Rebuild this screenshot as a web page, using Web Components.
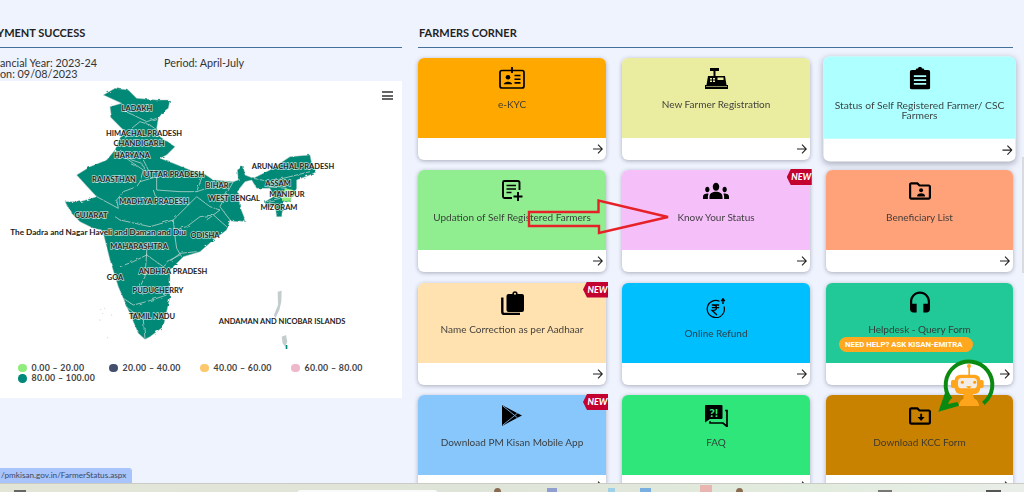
<!DOCTYPE html>
<html lang="en">
<head>
<meta charset="utf-8">
<title>PM Kisan - Farmers Corner</title>
<style>
  html, body { margin: 0; background: #eef3fe; font-family: Lato, "Open Sans", sans-serif; }
  svg { display: block; }
</style>
</head>
<body>
<page-shell>
  <section slot="left">
    <sec-heading cut>YMENT SUCCESS</sec-heading>
    <pay-info year="ancial Year: 2023-24" period="Period: April-July" date="on: 09/08/2023"></pay-info>
    <india-map></india-map>
  </section>
  <section slot="right">
    <sec-heading>FARMERS CORNER</sec-heading>
    <card-grid>
      <farmer-card color="#ffa800" label="e-KYC">
        <svg slot="icon" width="26" height="22" viewBox="0 0 26 22"><rect x="1" y="3.5" width="24" height="17.5" rx="2" fill="none" stroke="#000" stroke-width="1.7"/><path d="M13 0v6" stroke="#000" stroke-width="1.8"/><circle cx="9" cy="10.2" r="2.3"/><path d="M4.8 17.2c0-3.4 8.4-3.4 8.4 0z"/><path d="M15.5 8.5h6M15.5 12.2h6M15.5 15.9h6" stroke="#000" stroke-width="1.6"/></svg>
      </farmer-card>
      <farmer-card color="#eaed9f" label="New Farmer Registration">
        <svg slot="icon" width="23" height="21" viewBox="0 0 23 21"><path d="M0 17h23v4H0zM3 8h17l1.5 9H1.500zM5 0h9v3H10.500v5H8.500V3H5z"/><path d="M5 10h2v1.500H5zM8 10h2v1.500H8zM5 12.500h2V14H5zM8 12.500h2V14H8zM12.500 9.500h6V12h-6z" fill="#eaed9f"/><path d="M1 18.500h21" stroke="#eaed9f" stroke-width=".6"/></svg>
      </farmer-card>
      <farmer-card color="#aeffff" label="Status of Self Registered Farmer/ CSC Farmers" hovered>
        <svg slot="icon" width="20" height="22" viewBox="0 0 20 22"><rect y="3" width="20" height="19" rx="2.200"/><rect x="6" y="1.500" width="8" height="4" rx="1"/><circle cx="10" cy="2" r="2"/><path d="M4 9h12M4 12.800h12M4 16.600h12" stroke="#aeffff" stroke-width="1.700"/></svg>
      </farmer-card>

      <farmer-card color="#90ee90" label="Updation of Self Registered Farmers">
        <svg slot="icon" width="21" height="21" viewBox="0 0 21 21"><path d="M17.500 10V2.500a1.500 1.500 0 0 0-1.500-1.500H2.500A1.500 1.500 0 0 0 1 2.500v14A1.500 1.500 0 0 0 2.500 18H10" fill="none" stroke="#000" stroke-width="1.900"/><path d="M4.500 5.500h9.500M4.500 9h9.500M4.500 12.500h5" stroke="#000" stroke-width="1.700"/><path d="M16 12v9M11.500 16.500h9" stroke="#000" stroke-width="2"/></svg>
      </farmer-card>
      <farmer-card color="#f5c0fa" label="Know Your Status" new>
        <svg slot="icon" width="26" height="17" viewBox="0 5.500 24 12.500" preserveAspectRatio="none"><path d="M12 12.750c1.630 0 3.070.390 4.240.900 1.080.480 1.760 1.560 1.760 2.730V18H6v-1.610c0-1.180.680-2.260 1.760-2.730 1.170-.520 2.610-.910 4.240-.910zM4 13c1.100 0 2-.900 2-2s-.900-2-2-2-2 .900-2 2 .900 2 2 2zm1.130 1.100c-.370-.060-.740-.100-1.130-.100-.990 0-1.930.210-2.780.580C.480 14.900 0 15.620 0 16.430V18h4.500v-1.610c0-.830.230-1.610.630-2.290zM20 13c1.100 0 2-.900 2-2s-.900-2-2-2-2 .900-2 2 .900 2 2 2zm4 3.430c0-.810-.480-1.530-1.220-1.850-.850-.370-1.790-.580-2.780-.580-.390 0-.760.040-1.130.100.400.680.630 1.460.630 2.290V18H24v-1.570zM12 6c1.660 0 3 1.340 3 3s-1.340 3-3 3-3-1.340-3-3 1.340-3 3-3z"/></svg>
      </farmer-card>
      <farmer-card color="#ffa27a" label="Beneficiary List">
        <svg slot="icon" width="22" height="18" viewBox="2 4 20 16"><path d="M20 6h-8l-2-2H4c-1.100 0-1.990.900-1.990 2L2 18c0 1.100.900 2 2 2h16c1.100 0 2-.900 2-2V8c0-1.100-.900-2-2-2zm0 12H4V6h5.170l2 2H20v10z"/><circle cx="13" cy="11.400" r="1.800"/><path d="M9.500 17v-.800c0-1.500 2.300-2.200 3.500-2.200s3.500.700 3.500 2.200v.800z"/></svg>
      </farmer-card>

      <farmer-card color="#ffe2b0" label="Name Correction as per Aadhaar" new>
        <svg slot="icon" width="23" height="24" viewBox="0 0 23 24"><rect x="5.500" y="3" width="17.500" height="18" rx="2"/><circle cx="14" cy="2.800" r="2.600"/><circle cx="14" cy="2.800" r="1" fill="#ffe2b0"/><path d="M1.300 6.500V21a2 2 0 0 0 2 2H19" fill="none" stroke="#000" stroke-width="2.400"/></svg>
      </farmer-card>
      <farmer-card color="#00bfff" label="Online Refund" tall>
        <svg slot="icon" style="margin-top:5px" width="20" height="20" viewBox="0 0 20 20"><path d="M13.500 3.300A8.600 8.600 0 1 0 18 8.500" fill="none" stroke="#000" stroke-width="1.200"/><path d="M5.800 7h7.400M5.800 9.700h7.400M7 7c4.600 0 4.600 5.300 0 5.300H6l5 4.700" fill="none" stroke="#000" stroke-width="1.300"/><path d="M17 6V1.500M15.200 3.200 17 .8l1.800 2.400" fill="none" stroke="#000" stroke-width="1.400"/></svg>
      </farmer-card>
      <farmer-card color="#20c997" label="Helpdesk - Query Form">
        <svg slot="icon" style="margin-bottom:3px" width="20" height="22" viewBox="3 1 18 19"><path d="M12 1c-4.970 0-9 4.030-9 9v7c0 1.660 1.340 3 3 3h3v-8H5v-2c0-3.870 3.130-7 7-7s7 3.130 7 7v2h-4v8h3c1.660 0 3-1.340 3-3v-7c0-4.970-4.030-9-9-9z"/></svg>
        <help-pill slot="extra">NEED HELP? ASK KISAN-EMITRA</help-pill>
      </farmer-card>

      <farmer-card color="#88c7fc" label="Download PM Kisan Mobile App" new>
        <svg slot="icon" width="20" height="21" viewBox="0 0 20 21"><path d="M0 0 15 8l5 2.500L15 13 0 21z"/><path d="M.6.800 12.800 10.500.6 20.200M12.800 10.500 15.600 8M12.800 10.500l2.800 2.500" fill="none" stroke="#88c7fc" stroke-width=".8"/></svg>
      </farmer-card>
      <farmer-card color="#2ee67a" label="FAQ">
        <svg slot="icon" width="23" height="22" viewBox="0 0 23 22"><path d="M1 0h15.500a1 1 0 0 1 1 1v12a1 1 0 0 1-1 1H5l-5 3.500V1a1 1 0 0 1 1-1z"/><text x="8.800" y="11.500" text-anchor="middle" font-family="Lato, sans-serif" font-weight="900" font-size="12" fill="#2ee67a">?!</text><path d="M20 5.500h2v16l-4-3.500H5v-1.800" fill="none" stroke="#000" stroke-width="1.700"/></svg>
      </farmer-card>
      <farmer-card color="#c98200" label="Download KCC Form">
        <svg slot="icon" width="22" height="18" viewBox="2 4 20 16"><path d="M20 6h-8l-2-2H4c-1.100 0-1.990.900-1.990 2L2 18c0 1.100.900 2 2 2h16c1.100 0 2-.900 2-2V8c0-1.100-.900-2-2-2zm0 12H4V6h5.170l2 2H20v10z"/><path d="M12.200 10h1.700v3h2.300L13 16.600 9.800 13h2.400z"/></svg>
      </farmer-card>
    </card-grid>
  </section>
  <task-bar slot="bar"></task-bar>
  <status-tip slot="over">/pmkisan.gov.in/FarmerStatus.aspx</status-tip>
  <arrow-mark slot="over"></arrow-mark>
  <chat-bot slot="over"></chat-bot>
</page-shell>

<script>
// small helper so every element below looks the same
class Base extends HTMLElement {
    constructor() {
        super();
        this.attachShadow({ mode: 'open' });
    }
    connectedCallback() {
        this.shadowRoot.innerHTML = this.render();
    }
}

class PageShell extends Base {
    render() {
        return `
            <style>
                :host { display: flex; flex-direction: column; position: relative; height: 492px; overflow: hidden; background: #eef3fe; }
                .main { display: flex; gap: 16px; height: 483px; overflow: hidden; }
                .left { display: block; width: 402px; overflow: hidden; flex: none; }
                .right { display: block; width: 595px; flex: none; }
                .scroll { position: absolute; right: 0; top: 157px; width: 2px; height: 116px; background: #d9dbe0; }
            </style>
            <div class="main">
                <div class="left"><slot name="left"></slot></div>
                <div class="right"><slot name="right"></slot></div>
            </div>
            <slot name="bar"></slot>
            <div class="scroll"></div>
            <slot name="over"></slot>
        `;
    }
}

class SecHeading extends Base {
    render() {
        return `
            <style>
                :host { display: block; padding: 25px 0 6px; border-bottom: 1.5px solid #44709b; color: #222; font: 700 11px/16px Lato, sans-serif; white-space: nowrap; }
                span { display: block; margin-left: 1px; }
                :host([cut]) span { margin-left: -3px; }
            </style>
            <span><slot></slot></span>
        `;
    }
}

class PayInfo extends Base {
    render() {
        return `
            <style>
                :host { display: grid; grid-template-columns: 164px 1fr; padding: 9px 0 1.500px; color: #333; font: 400 10.800px/11px Lato, sans-serif; }
            </style>
            <span>${this.getAttribute('year')}</span>
            <span>${this.getAttribute('period')}</span>
            <span>${this.getAttribute('date')}</span>
        `;
    }
}

const STATE_LABELS = [
    ['LADAKH', 137, 108], ['HIMACHAL PRADESH', 144, 133], ['CHANDIGARH', 139, 143], ['HARYANA', 132, 155],
    ['ARUNACHAL PRADESH', 293, 166], ['RAJASTHAN', 114, 179], ['UTTAR PRADESH', 174, 174], ['BIHAR', 217, 185],
    ['ASSAM', 278, 183], ['MANIPUR', 287, 194], ['WEST BENGAL', 234, 198], ['MADHYA PRADESH', 154, 201],
    ['MIZORAM', 279, 207], ['GUJARAT', 91, 215], ['The Dadra and Nagar Haveli and Daman and Diu', 98, 232],
    ['ODISHA', 205, 235], ['MAHARASHTRA', 139, 246], ['ANDHRA PRADESH', 173, 271], ['GOA', 115, 277],
    ['PUDUCHERRY', 158, 290], ['TAMIL NADU', 152, 316], ['ANDAMAN AND NICOBAR ISLANDS', 282, 321]
];

const LEGEND = [
    ['#90ed7d', '0.00 - 20.00'], ['#434f6b', '20.00 - 40.00'], ['#fdc76c', '40.00 - 60.00'],
    ['#efb8c8', '60.00 - 80.00'], ['#00897b', '80.00 - 100.00']
];

class IndiaMap extends Base {
    render() {
        // paths are in 3x page pixels (taken from zoomed crops), hence the scale
        const labels = STATE_LABELS.map(([t, x, y]) =>
            `<text x="${x}" y="${y + 3}"${t.startsWith('The') ? ' class="mixed"' : ''}>${t}</text>`).join('');
        const legend = LEGEND.map(([c, t]) =>
            `<span class="item"><i style="background:${c}"></i>${t.replace(' - ', ' – ')}</span>`).join('');
        return `
            <style>
                :host { display: block; position: relative; background: #fff; height: 317px; }
                svg { display: block; }
                text { font: 700 7.500px Lato, sans-serif; fill: #222; text-anchor: middle; paint-order: stroke; stroke: rgba(255,255,255,.7); stroke-width: 1.400px; }
                text.mixed { font-size: 8.200px; }
                .menu { position: absolute; left: 382px; top: 10px; width: 11px; height: 9px; background: repeating-linear-gradient(#666 0 2px, transparent 2px 3.500px); }
                .legend { display: grid; grid-template-columns: repeat(4, 91px); padding-left: 18px; color: #444; font: 700 8.800px/10.500px Lato, sans-serif; letter-spacing: .3px; }
                .item { display: flex; align-items: center; gap: 5px; white-space: nowrap; }
                i { width: 8.500px; height: 8.500px; border-radius: 50%; flex: none; }
            </style>
            <svg width="402" height="282" viewBox="0 81 402 282">
                <defs>
                    <filter id="rough" x="-5%" y="-5%" width="110%" height="110%">
                        <feTurbulence type="fractalNoise" baseFrequency=".07" numOctaves="2" seed="4"/>
                        <feDisplacementMap in="SourceGraphic" scale="9"/>
                    </filter>
                </defs>
                <g transform="scale(.33333)">
                    <g filter="url(#rough)">
                    <path fill="#008976" stroke="#b9cbc7" stroke-width="1.500" d="M310 285 345 265 385 270 410 295 470 300 510 300 505 325 490 335 475 355 470 385 480 410 525 440 500 465 480 475 520 490 570 510 610 520 640 540 700 545 715 540 712 510 730 497 735 525 760 535 810 510 870 470 930 465 935 490 950 515 930 525 890 540 890 565 875 600 850 610 845 650 830 650 825 615 800 625 795 605 820 590 810 565 770 565 755 540 735 545 715 570 720 620 738 665 690 660 680 690 640 720 600 755 550 770 510 810 510 890 490 980 450 1010 435 1018 415 1000 385 930 355 860 330 780 315 720 310 700 305 690 280 685 240 665 215 640 195 605 240 605 290 590 262 560 230 525 270 500 320 480 345 450 360 415 370 390 335 355 330 320 365 310z"/>
                    <path fill="#90ed7d" d="M845 592 855 565 880 570 875 600 850 606z"/>
                    <g fill="none" stroke="#c9dbd7" stroke-width="2.200">
                        <path d="M365 330 400 345 440 365 470 355M395 385 420 365 450 375 470 390M375 415 400 390M360 450 395 480 425 490 440 520M390 490 410 500M430 480 445 510"/>
                        <path d="M345 450 400 490 430 510 420 545 410 560 370 575 350 600 355 625 290 590M420 545 470 530 470 570 540 575 590 575 610 520M460 570 470 600 560 605"/>
                        <path d="M345 650 360 660 450 680 520 660 560 620 590 590M590 575 620 565 700 545M590 590 630 620 660 630 620 660M700 545 680 580 660 620 690 660"/>
                        <path d="M520 690 560 680 600 650 640 645 680 680M520 660 525 710 530 745 545 770M360 800 400 785 440 765 440 750M440 760 435 830 420 860 425 880 430 885"/>
                        <path d="M440 765 490 800 540 760 590 755M500 785 540 765M370 895 400 915 440 905 500 885M385 925 430 960 435 1015"/>
                        <path d="M760 535 810 545 870 530 930 515M800 560 860 565M800 605 860 590"/>
                    </g>
                    </g>
                    <path fill="#c4cdcd" d="M833 875 845 872 844 905 838 930 826 955 822 945 834 915zM845 1010 858 1005 862 1025 855 1040 848 1030z"/>
                    <path fill="#00897b" d="M857 1035h5v12h-5z"/>
                    <g fill="#d5dbdb"><circle cx="302" cy="928" r="2"/><circle cx="314" cy="925" r="2"/><circle cx="308" cy="940" r="2"/><circle cx="335" cy="945" r="2"/><circle cx="300" cy="960" r="2"/><circle cx="322" cy="1013" r="2"/></g>
                </g>
                ${labels}
            </svg>
            <div class="menu"></div>
            <div class="legend">${legend}</div>
        `;
    }
}

class CardGrid extends Base {
    render() {
        return `
            <style>
                :host { display: grid; grid-template-columns: 188px 187.500px 187px; grid-auto-rows: 102px; gap: 10.500px 16.250px; padding-top: 9.500px; }
            </style>
            <slot></slot>
        `;
    }
}

class FarmerCard extends Base {
    render() {
        const ribbon = this.hasAttribute('new') ? '<div class="ribbon">NEW</div>' : '';
        return `
            <style>
                :host { display: block; position: relative; border-radius: 6px; background: #fff; box-shadow: 0 1px 4px rgba(40,40,60,.35); color: #333; }
                :host([hovered]) { transform: scale(1.028); box-shadow: 0 2px 6px rgba(40,40,60,.35); }
                .top { height: 80px; box-sizing: border-box; padding: 8.500px 6px 0; border-radius: 6px 6px 0 0; background: ${this.getAttribute('color')}; text-align: center; }
                .icon { display: flex; align-items: center; justify-content: center; height: 24px; margin-bottom: 9px; }
                :host([tall]) .icon { height: 28px; }
                .label { font: 400 10px/10px Lato, sans-serif; opacity: .92; }
                .bottom { display: flex; justify-content: flex-end; align-items: center; height: 22px; padding-right: 3px; }
                .ribbon { position: absolute; right: -2px; top: -1px; width: 25px; height: 16px; padding-left: 4px; box-sizing: border-box; background: #c40030; color: #fff; font: italic 900 9px/16px Lato, sans-serif; text-align: center; clip-path: polygon(0 50%, 4px 0, 100% 0, 100% 100%, 4px 100%); }
                ::slotted(help-pill) { position: absolute; left: 13px; top: 54px; }
            </style>
            <div class="top">
                <div class="icon"><slot name="icon"></slot></div>
                <div class="label">${this.getAttribute('label')}</div>
            </div>
            <div class="bottom">
                <svg width="10" height="10" viewBox="0 0 10 10" fill="none" stroke="#222" stroke-width="1.100"><path d="M0 5h9.300M5 .7 9.300 5 5 9.300"/></svg>
            </div>
            ${ribbon}
            <slot name="extra"></slot>
        `;
    }
}

class HelpPill extends Base {
    render() {
        return `
            <style>
                :host { display: block; width: 134px; box-sizing: border-box; height: 15px; padding-left: 6px; border-radius: 8px; background: #ffa81f; color: #fff; font: 700 7.800px/15px Roboto, sans-serif; white-space: nowrap; }
            </style>
            <slot></slot>
        `;
    }
}

class TaskBar extends Base {
    render() {
        return `
            <style>
                :host { display: block; position: relative; height: 9px; overflow: hidden; box-sizing: border-box; border-top: 1px solid #c9cbc4; background: linear-gradient(90deg, #e3e6d7, #dfe4d8 45%, #e2ecde 80%, #e9eee8); }
                b { position: absolute; top: 4px; height: 8px; }
                .search { left: 297px; width: 141px; top: 6px; background: #fafafa; border-radius: 4px; }
            </style>
            <b class="search"></b>
            <b style="left:494px;width:7px;background:#8a6a50;border-radius:50%"></b>
            <b style="left:547px;width:10px;background:#8f9fd0"></b>
            <b style="left:608px;width:7px;background:#9fd0e8"></b>
            <b style="left:640px;width:11px;background:#79aee0"></b>
            <b style="left:700px;top:1px;width:12px;background:#e8b5b0"></b>
            <b style="left:736px;width:7px;background:#8a6a50;border-radius:50%"></b>
            <b style="left:14px;top:6px;width:12px;height:2px;background:#666"></b>
            <b style="left:878px;top:6px;width:14px;height:2px;background:#777"></b>
            <b style="left:986px;top:6px;width:15px;height:2px;background:#555"></b>
        `;
    }
}

class StatusTip extends Base {
    render() {
        return `
            <style>
                :host { position: absolute; left: 0; top: 468px; width: 132px; height: 15px; box-sizing: border-box; padding-left: 1px; border-radius: 0 3px 0 0; background: #a8c4fa; color: #3b4a66; font: 400 8.200px/15px Lato, sans-serif; white-space: nowrap; }
            </style>
            <slot></slot>
        `;
    }
}

class ArrowMark extends Base {
    render() {
        return `
            <style>
                :host { position: absolute; left: 527px; top: 198px; }
            </style>
            <svg width="144" height="38" viewBox="527 198 144 38" style="display:block"><path d="M529 212H598.500V200.500L668 217 599 233V226H529z" fill="none" stroke="#e62128" stroke-width="2.400"/></svg>
        `;
    }
}

class ChatBot extends Base {
    render() {
        // drawn in 3x coordinates of the 90x80 crop around the widget
        return `
            <style>
                :host { position: absolute; left: 920px; top: 340px; }
            </style>
            <svg width="90" height="80" viewBox="0 0 270 240" style="display:block">
                <path d="M92 178A70 70 0 1 1 190 190" fill="none" stroke="#0b8a12" stroke-width="12"/>
                <path d="M78 150 55 215 118 197 112 186 84 192 92 175z" fill="#0b8a12"/>
                <path d="M145 82h5v24h-5z" fill="#ffa51c"/>
                <circle cx="147" cy="78" r="6" fill="#ffa51c"/>
                <rect x="93" y="120" width="14" height="24" rx="5" fill="#ffa51c"/>
                <rect x="178" y="120" width="13" height="24" rx="5" fill="#ffa51c"/>
                <rect x="104" y="104" width="77" height="58" rx="17" fill="#ffa51c"/>
                <rect x="114" y="114" width="57" height="31" rx="11" fill="#f3ece4"/>
                <circle cx="127" cy="127" r="4.500" fill="#ff9a00"/>
                <circle cx="164" cy="127" r="4.500" fill="#ff9a00"/>
                <path d="M139 139h15c-2 7-13 7-15 0z" fill="#ff9a00"/>
                <path d="M130 162h28l5 14c8 3 13 10 15 22h-62c2-12 7-19 15-22z" fill="#ffa51c"/>
            </svg>
        `;
    }
}

customElements.define('page-shell', PageShell);
customElements.define('sec-heading', SecHeading);
customElements.define('pay-info', PayInfo);
customElements.define('india-map', IndiaMap);
customElements.define('card-grid', CardGrid);
customElements.define('farmer-card', FarmerCard);
customElements.define('help-pill', HelpPill);
customElements.define('task-bar', TaskBar);
customElements.define('status-tip', StatusTip);
customElements.define('arrow-mark', ArrowMark);
customElements.define('chat-bot', ChatBot);
</script>
</body>
</html>
